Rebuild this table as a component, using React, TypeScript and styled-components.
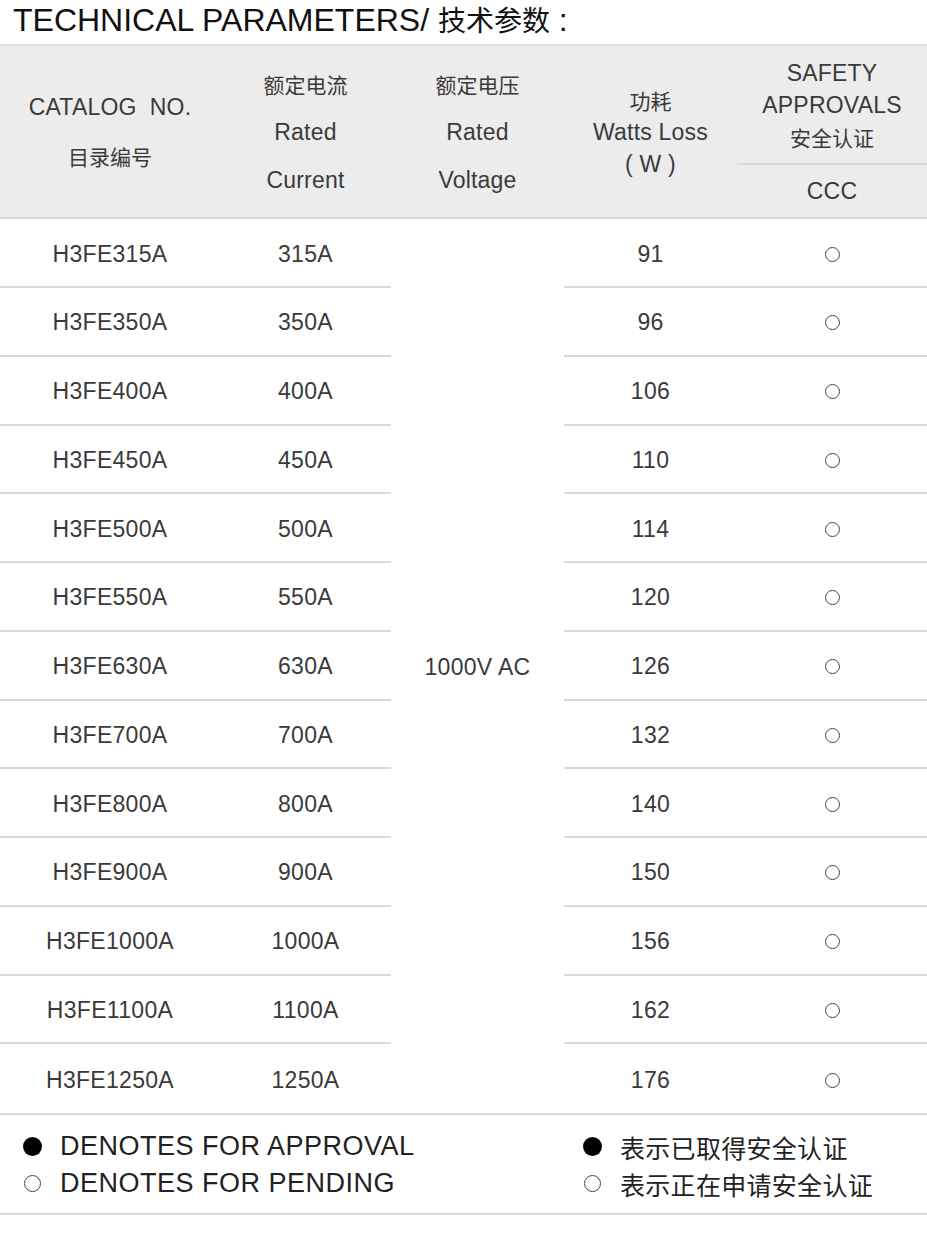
import React from 'react';
import styled, { createGlobalStyle } from 'styled-components';

const GlobalStyle = createGlobalStyle`
  html, body { margin: 0; padding: 0; background: #fff; }
  body {
    font-family: "Liberation Sans", Arial, "Noto Sans CJK SC", sans-serif;
    color: #333;
  }
  * { box-sizing: border-box; }
`;

const COLS = '220px 171px 173px 173px 1fr';
const LINE = '#d9d9d9';
const CJK = '"Noto Sans CJK SC", "Liberation Sans", sans-serif';
const TEXT = '#3a3a3a';

const Page = styled.div`
  width: 927px;
`;

const Title = styled.h1`
  margin: 0;
  height: 44px;
  padding-left: 13px;
  font-size: 32px;
  line-height: 38px;
  font-weight: 400;
  color: #111;
  white-space: nowrap;
`;

const Cn = styled.span<{ $size?: number }>`
  font-family: ${CJK};
  font-size: ${(p) => p.$size ?? 21}px;
  letter-spacing: 0;
`;

const Header = styled.div`
  display: grid;
  grid-template-columns: ${COLS};
  height: 175px;
  background: #ececec;
  border-top: 2px solid #dedede;
  border-bottom: 2px solid ${LINE};
`;

const HeadCell = styled.div<{ $lh: number }>`
  display: flex;
  flex-direction: column;
  align-items: center;
  justify-content: center;
  text-align: center;
  font-size: 23px;
  letter-spacing: 0.2px;
  line-height: ${(p) => p.$lh}px;
  color: ${TEXT};
  white-space: nowrap;
`;

const SafetyCell = styled.div`
  display: flex;
  flex-direction: column;
`;

const SafetyTop = styled(HeadCell)`
  flex: 1;
  border-bottom: 2px solid ${LINE};
`;

const SafetyBottom = styled(HeadCell)`
  height: 52px;
`;

const Body = styled.div`
  display: grid;
  grid-template-columns: ${COLS};
  grid-template-rows: 69px repeat(12, 68.75px);
  border-bottom: 2px solid ${LINE};
`;

const Cell = styled.div<{ $last?: boolean }>`
  display: flex;
  align-items: center;
  justify-content: center;
  padding-top: 3px;
  font-size: 23px;
  letter-spacing: 0.3px;
  color: ${TEXT};
  border-bottom: ${(p) => (p.$last ? 'none' : `2px solid ${LINE}`)};
`;

const VoltageCell = styled.div`
  grid-column: 3 / 4;
  grid-row: 1 / 14;
  display: flex;
  align-items: center;
  justify-content: center;
  padding-top: 2px;
  font-size: 23px;
  letter-spacing: 0.3px;
  color: ${TEXT};
`;

const Circle = styled.span<{ $size: number; $filled?: boolean; $stroke?: number }>`
  display: inline-block;
  flex: none;
  width: ${(p) => p.$size}px;
  height: ${(p) => p.$size}px;
  border-radius: 50%;
  background: ${(p) => (p.$filled ? '#000' : 'transparent')};
  border: ${(p) => (p.$filled ? 'none' : `${p.$stroke ?? 1}px solid #444`)};
`;

const Footer = styled.div`
  display: grid;
  grid-template-columns: 560px 1fr;
  padding: 13px 0 11px 23px;
  border-bottom: 2px solid ${LINE};
`;

const Legend = styled.div`
  display: flex;
  flex-direction: column;
`;

const LegendItem = styled.div<{ $cn?: boolean }>`
  display: flex;
  align-items: center;
  height: 37px;
  font-size: ${(p) => (p.$cn ? 25 : 27)}px;
  letter-spacing: ${(p) => (p.$cn ? 0.3 : 0.5)}px;
  font-family: ${(p) => (p.$cn ? CJK : '"Liberation Sans", Arial, sans-serif')};
  color: #222;
  white-space: nowrap;
`;

const Mark = styled.span`
  width: 19px;
  margin-right: 18px;
  display: flex;
  align-items: center;
  justify-content: center;
`;

const rows: [string, string, string][] = [
  ['H3FE315A', '315A', '91'],
  ['H3FE350A', '350A', '96'],
  ['H3FE400A', '400A', '106'],
  ['H3FE450A', '450A', '110'],
  ['H3FE500A', '500A', '114'],
  ['H3FE550A', '550A', '120'],
  ['H3FE630A', '630A', '126'],
  ['H3FE700A', '700A', '132'],
  ['H3FE800A', '800A', '140'],
  ['H3FE900A', '900A', '150'],
  ['H3FE1000A', '1000A', '156'],
  ['H3FE1100A', '1100A', '162'],
  ['H3FE1250A', '1250A', '176'],
];

export default function App() {
  return (
    <Page>
      <GlobalStyle />
      <Title>
        TECHNICAL PARAMETERS/ <Cn $size={28}>技术参数</Cn> :
      </Title>
      <Header>
        <HeadCell $lh={49}>
          <span>CATALOG&nbsp; NO.</span>
          <Cn>目录编号</Cn>
        </HeadCell>
        <HeadCell $lh={48}>
          <Cn>额定电流</Cn>
          <span>Rated</span>
          <span>Current</span>
        </HeadCell>
        <HeadCell $lh={48}>
          <Cn>额定电压</Cn>
          <span>Rated</span>
          <span>Voltage</span>
        </HeadCell>
        <HeadCell $lh={32}>
          <Cn>功耗</Cn>
          <span>Watts Loss</span>
          <span>( W )</span>
        </HeadCell>
        <SafetyCell>
          <SafetyTop $lh={32}>
            <span>SAFETY</span>
            <span>APPROVALS</span>
            <Cn>安全认证</Cn>
          </SafetyTop>
          <SafetyBottom $lh={32}>
            <span>CCC</span>
          </SafetyBottom>
        </SafetyCell>
      </Header>
      <Body>
        <VoltageCell>1000V AC</VoltageCell>
        {rows.map(([cat, cur, w], i) => {
          const last = i === rows.length - 1;
          return (
            <React.Fragment key={cat}>
              <Cell $last={last}>{cat}</Cell>
              <Cell $last={last}>{cur}</Cell>
              <Cell $last={last}>{w}</Cell>
              <Cell $last={last}>
                <Circle $size={15} />
              </Cell>
            </React.Fragment>
          );
        })}
      </Body>
      <Footer>
        <Legend>
          <LegendItem>
            <Mark>
              <Circle $size={19} $filled />
            </Mark>
            DENOTES FOR APPROVAL
          </LegendItem>
          <LegendItem>
            <Mark>
              <Circle $size={17} $stroke={1.5} />
            </Mark>
            DENOTES FOR PENDING
          </LegendItem>
        </Legend>
        <Legend>
          <LegendItem $cn>
            <Mark>
              <Circle $size={19} $filled />
            </Mark>
            表示已取得安全认证
          </LegendItem>
          <LegendItem $cn>
            <Mark>
              <Circle $size={17} $stroke={1.5} />
            </Mark>
            表示正在申请安全认证
          </LegendItem>
        </Legend>
      </Footer>
    </Page>
  );
}
